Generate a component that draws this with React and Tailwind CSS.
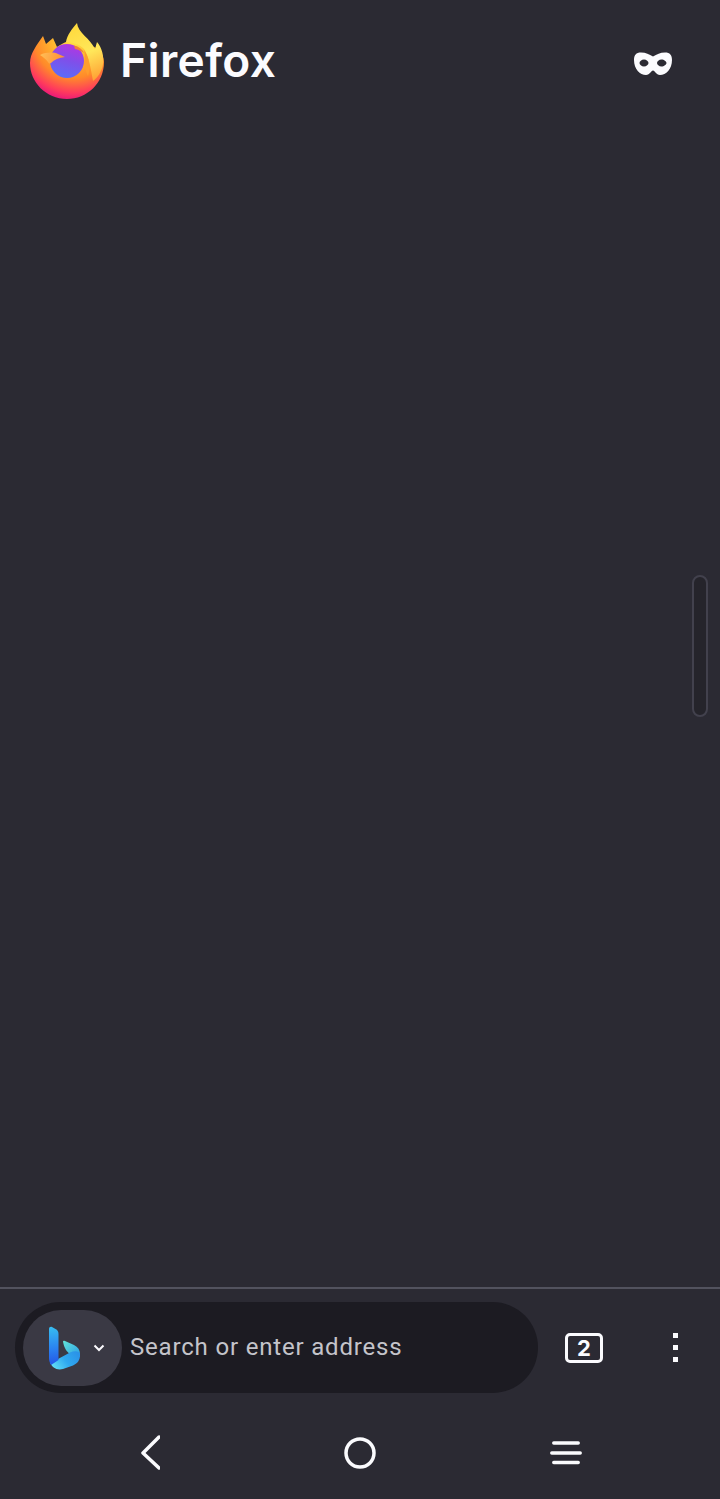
// App.jsx
function FirefoxLogo() {
  return (
    <svg width="78" height="82" viewBox="28 20 78 82" className="shrink-0">
      <defs>
        <radialGradient id="ffBody" gradientUnits="userSpaceOnUse" cx="74" cy="38" r="64">
          <stop offset="0" stopColor="#ffe84a" />
          <stop offset="0.35" stopColor="#ffb52e" />
          <stop offset="0.62" stopColor="#ff8a2a" />
          <stop offset="0.85" stopColor="#ff3b5c" />
          <stop offset="1" stopColor="#e5127f" />
        </radialGradient>
        <linearGradient id="ffFlame" gradientUnits="userSpaceOnUse" x1="72" y1="24" x2="96" y2="78">
          <stop offset="0" stopColor="#ffd93b" />
          <stop offset="0.55" stopColor="#ffe75a" />
          <stop offset="1" stopColor="#ffa436" />
        </linearGradient>
        <linearGradient id="ffGlobe" gradientUnits="userSpaceOnUse" x1="72" y1="43" x2="62" y2="78">
          <stop offset="0" stopColor="#b833e1" />
          <stop offset="0.5" stopColor="#7e50ea" />
          <stop offset="1" stopColor="#5b6df8" />
        </linearGradient>
        <linearGradient id="ffTail" gradientUnits="userSpaceOnUse" x1="42" y1="52" x2="66" y2="60">
          <stop offset="0" stopColor="#ffbc55" />
          <stop offset="1" stopColor="#ff8a30" />
        </linearGradient>
      </defs>
      <path
        d="M43 36 L46 44 L53 38 L57 47 C60 45 63 43 66 42 C70 38 96 46 99 50 C102 54 104 58 104 62 C104 83 87 99 67 99 C46 99 30 82 30 63 C30 53 37 45 43 36 Z"
        fill="url(#ffBody)"
      />
      <path
        d="M66 42 C67 35 72 29 77 23 C78 33 90 38 95 49 L97 42 C102 48 104 56 103 64 C102 72 97 78 93 81 C91 70 89 56 84 49 C79 44 72 42 66 42 Z"
        fill="url(#ffFlame)"
      />
      <path d="M84 50 C89 57 91 67 88 76 C86 72 85 68 84 63 C85 58 85 54 84 50 Z" fill="#ff9d2e" />
      <circle cx="67" cy="61" r="17" fill="url(#ffGlobe)" />
      <path d="M74 45.5 C79 46.5 82 49 84 53 C81 51 78 49.5 75 49 Z" fill="#f0803a" />
      <path
        d="M40 55 C46 52 54 52 58 54 L65 57 C59 57.5 54 60 51 63 C49 64 48.5 63 48 62 C46 59 43 57 40 55 Z"
        fill="url(#ffTail)"
      />
    </svg>
  );
}

function BingLogo() {
  return (
    <svg width="32" height="44" viewBox="48 1326 32 44" className="shrink-0">
      <defs>
        <linearGradient id="bingStem" gradientUnits="userSpaceOnUse" x1="52" y1="1327" x2="56" y2="1364">
          <stop offset="0" stopColor="#37bdf0" />
          <stop offset="0.6" stopColor="#2a80f0" />
          <stop offset="1" stopColor="#2457e6" />
        </linearGradient>
        <linearGradient id="bingBowl" gradientUnits="userSpaceOnUse" x1="79" y1="1350" x2="54" y2="1368">
          <stop offset="0" stopColor="#2a8ee6" />
          <stop offset="0.55" stopColor="#2fa9f0" />
          <stop offset="1" stopColor="#5fdcf5" />
        </linearGradient>
        <linearGradient id="bingTop" gradientUnits="userSpaceOnUse" x1="63" y1="1341" x2="79" y2="1356">
          <stop offset="0" stopColor="#62e4d8" />
          <stop offset="1" stopColor="#2c9fe6" />
        </linearGradient>
      </defs>
      <path
        d="M63 1341.5 C63 1340.5 64 1340.5 65 1341 L74 1345 C78 1347 80 1350 80 1354 L80 1357 L70 1354 C67 1352 64 1348 63 1341.5 Z"
        fill="url(#bingTop)"
      />
      <path
        d="M80 1355 C80 1360 78 1363 73 1365.5 L63 1369 C57 1370.5 52 1368 50 1362 L58 1359 L70 1352.5 C75 1350.5 80 1351 80 1355 Z"
        fill="url(#bingBowl)"
      />
      <path
        d="M49 1329 C49 1327 50.5 1326.5 52 1327 L55.5 1329 C57.5 1330 58.5 1331.5 58.5 1334 L58.5 1360 L51 1365 C49.5 1362 49 1360 49 1358 Z"
        fill="url(#bingStem)"
      />
    </svg>
  );
}

function MaskIcon() {
  return (
    <svg width="40" height="24" viewBox="633 51 40 24">
      <path
        fillRule="evenodd"
        fill="#fbfbfe"
        d="M641 51.5 C646 51.5 649 53.5 653 55.5 C657 53.5 660 51.5 665 51.5 C670 51.5 672 54 672 59 C672 68 666 74 660 74 C656 74 655 69.5 653 69.5 C651 69.5 650 74 646 74 C640 74 634 68 634 59 C634 54 636 51.5 641 51.5 Z M644 58.5 C641.5 58.5 639.5 60.5 639.5 62 C639.5 63.5 641.5 65.5 644 65.5 C646.5 65.5 648.5 63.5 648.5 62 C648.5 60.5 646.5 58.5 644 58.5 Z M661.5 58.5 C659 58.5 657 60.5 657 62 C657 63.5 659 65.5 661.5 65.5 C664 65.5 666.5 63.5 666.5 62 C666.5 60.5 664 58.5 661.5 58.5 Z"
      />
    </svg>
  );
}

export default function App() {
  return (
    <div className="relative flex flex-col h-[1499px] bg-[#2b2a33] font-['Roboto',sans-serif] overflow-hidden">
      {/* Wordmark row */}
      <div className="flex justify-between pl-7 pr-[47px] pt-5 h-[122px] items-start">
        <div className="flex items-center gap-[15px]">
          <FirefoxLogo />
          <span className="font-['Inter',sans-serif] font-semibold text-[46px] tracking-[0.4px] leading-none text-[#fbfbfe] -mt-[2px] -ml-[1px]">
            Firefox
          </span>
        </div>
        <div className="pt-[32px]">
          <MaskIcon />
        </div>
      </div>

      <div className="flex-1" />

      {/* Scrollbar handle */}
      <div className="absolute left-[692px] top-[575px] w-4 h-[142px] rounded-lg border-2 border-[#42414d] bg-[#25242b]" />

      {/* Toolbar */}
      <div className="border-t-2 border-[#52525e] h-[122px] flex items-start pt-[13px] pl-[15px]">
        <div className="flex items-center w-[523px] h-[91px] rounded-full bg-[#1c1b22] pl-2">
          <div className="flex items-center w-[99px] h-[76px] rounded-full bg-[#3a3944] pl-[25px]">
            <BingLogo />
            <svg width="12" height="8" viewBox="0 0 12 8" className="ml-[13px]" fill="none">
              <path d="M1.5 1.5 L6 6 L10.5 1.5" stroke="#fbfbfe" strokeWidth="2" />
            </svg>
          </div>
          <span className="ml-2 -mt-[2px] text-2xl tracking-[0.82px] text-[#c4c4ca]">Search or enter address</span>
        </div>
        <div className="ml-[27px] mt-[31px] w-[38px] h-[30px] rounded-[5px] border-[3px] border-[#fbfbfe] flex items-center justify-center text-[#fbfbfe] font-bold text-[22px] leading-none font-['Inter',sans-serif]">
          2
        </div>
        <div className="ml-[70px] mt-[31px] flex flex-col gap-[7px]">
          <div className="w-[5px] h-[5px] bg-[#fbfbfe]" />
          <div className="w-[5px] h-[5px] bg-[#fbfbfe]" />
          <div className="w-[5px] h-[5px] bg-[#fbfbfe]" />
        </div>
      </div>

      {/* Android nav bar */}
      <div className="h-[90px] grid grid-cols-3 items-start pt-[25px] px-[120px]">
        <svg width="40" height="36" viewBox="0 0 40 36" fill="none">
          <path d="M39 3 L23 19 L39 34" stroke="#fbfbfe" strokeWidth="3.5" strokeLinecap="round" strokeLinejoin="round" />
        </svg>
        <svg width="40" height="36" viewBox="0 0 40 36" fill="none" className="justify-self-center">
          <circle cx="20" cy="19" r="14" stroke="#fbfbfe" strokeWidth="3.5" />
        </svg>
        <svg width="40" height="36" viewBox="0 0 40 36" fill="none" className="justify-self-end mr-[18px]">
          <path d="M11.75 9 H36.25 M9.75 19 H38.25 M11.75 28.5 H36.25" stroke="#fbfbfe" strokeWidth="3.4" strokeLinecap="round" />
        </svg>
      </div>
    </div>
  );
}
